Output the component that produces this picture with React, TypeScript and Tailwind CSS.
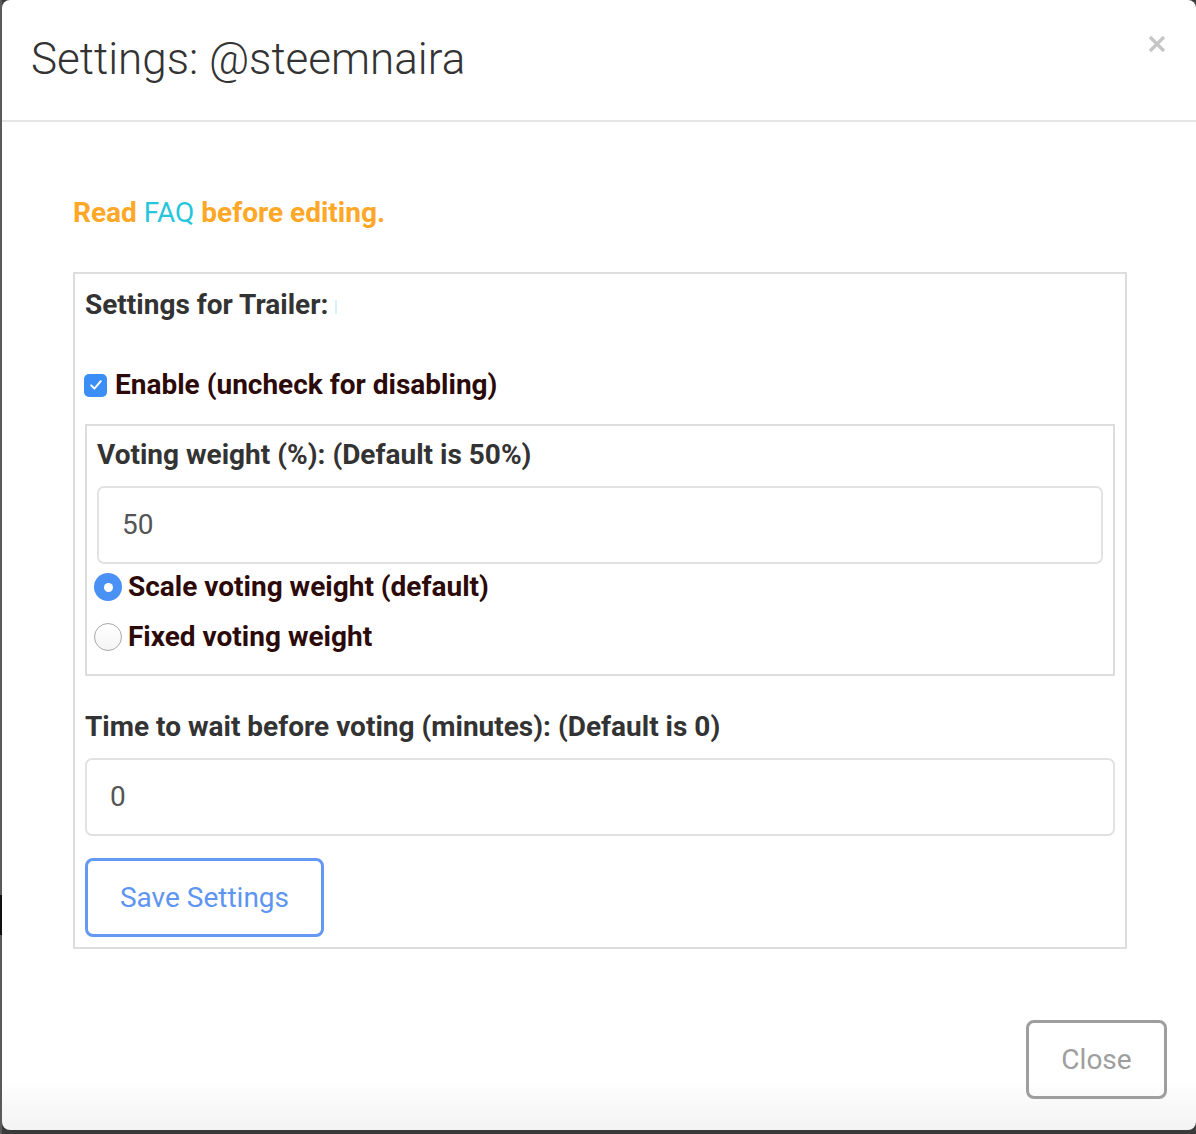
import React from 'react';

const font = "font-['Roboto','Liberation_Sans',sans-serif]";

function Radio({ checked, label }: { checked: boolean; label: string }) {
    return (
        <label className="flex items-center h-[36px] -ml-[3px]">
            {checked ? (
                <span className="w-[28px] h-[28px] rounded-full bg-[#4a91f6] flex items-center justify-center shrink-0">
                    <span className="w-[9px] h-[9px] rounded-full bg-white" />
                </span>
            ) : (
                <span className="w-[28px] h-[28px] rounded-full border-[1.5px] border-[#a8a8a8] bg-gradient-to-b from-white to-[#f4f4f4] shrink-0" />
            )}
            <span className="ml-[6px] text-[28px] font-bold text-[#2d0a0a] leading-[36px]">{label}</span>
        </label>
    );
}

export default function App() {
    return (
        <div className={`flex w-[1196px] h-[1134px] bg-[#3a3a3a] overflow-hidden ${font}`}>
            {/* page behind the modal */}
            <div className="w-[2px] flex flex-col shrink-0">
                <div className="h-[895px] bg-[#5a5a5a]" />
                <div className="h-[40px] bg-[#111]" />
                <div className="flex-1 bg-[#5a5a5a]" />
            </div>

            <div className="flex-1 h-[1130px] rounded-[8px] flex flex-col bg-[linear-gradient(to_bottom,#ffffff_1078px,#f3f3f3_1130px)]">
                {/* Header */}
                <div className="h-[122px] border-b-2 border-[#e5e5e5] flex justify-between shrink-0">
                    <h4 className="mt-[37px] pl-[29px] text-[44px] font-light text-[#333] leading-none">
                        Settings: @steemnaira
                    </h4>
                    <button className="mt-[35px] mr-[30px] w-[18px] h-[18px]">
                        <svg viewBox="0 0 18 18" width="18" height="18">
                            <path d="M2 2 L16 16 M16 2 L2 16" stroke="#c6c6c6" strokeWidth="3.2" strokeLinecap="butt" />
                        </svg>
                    </button>
                </div>

                {/* Body */}
                <div className="pl-[71px] pr-[69px] pt-[73px]">
                    <p className="text-[28px] font-bold text-[#ffa726] leading-[36px]">
                        Read <a className="font-normal text-[#26c6da]">FAQ</a> before editing.
                    </p>

                    <div className="mt-[41px] border-2 border-[#dddddd] px-[10px] pt-[13px] pb-[10px]">
                        <h5 className="text-[28px] font-bold text-[#333] leading-[36px]">
                            Settings for Trailer: <span className="inline-block w-[2px] h-[14px] rounded-full bg-[#d4f3f8] align-middle" />
                        </h5>

                        <label className="mt-[44px] flex items-center h-[36px] -ml-[1px]">
                            <span className="w-[23px] h-[23px] rounded-[5px] bg-[#3b8ef6] flex items-center justify-center shrink-0">
                                <svg viewBox="0 0 16 16" width="16" height="16">
                                    <path d="M3.2 8.4 L6.4 11.6 L12.8 4.2" fill="none" stroke="#fff" strokeWidth="2" strokeLinecap="round" strokeLinejoin="round" />
                                </svg>
                            </span>
                            <span className="ml-[8px] text-[28px] font-bold text-[#2d0a0a] leading-[36px]">
                                Enable (uncheck for disabling)
                            </span>
                        </label>

                        <div className="mt-[21px] border-2 border-[#dddddd] px-[10px] pt-[11px] pb-[19px]">
                            <label className="block text-[28px] font-bold text-[#333] leading-[36px]">
                                Voting weight (%): (Default is 50%)
                            </label>
                            <div className="mt-[13px] h-[78px] border-2 border-[#e2e2e2] rounded-[7px] pl-[23px] flex items-center text-[28px] text-[#555]">
                                50
                            </div>
                            <div className="mt-[5px] flex flex-col gap-[14px]">
                                <Radio checked label="Scale voting weight (default)" />
                                <Radio checked={false} label="Fixed voting weight" />
                            </div>
                        </div>

                        <label className="block mt-[33px] text-[28px] font-bold text-[#333] leading-[36px]">
                            Time to wait before voting (minutes): (Default is 0)
                        </label>
                        <div className="mt-[13px] h-[78px] border-2 border-[#e2e2e2] rounded-[7px] pl-[23px] flex items-center text-[28px] text-[#555]">
                            0
                        </div>

                        <button className="mt-[22px] w-[239px] h-[79px] border-[3px] border-[#6398f3] rounded-[8px] text-[28px] text-[#5e95f1] flex items-center justify-center">
                            Save Settings
                        </button>
                    </div>
                </div>

                {/* Footer */}
                <div className="mt-auto flex justify-end pr-[29px] pb-[31px]">
                    <button className="w-[141px] h-[79px] border-[3px] border-[#9e9e9e] rounded-[8px] text-[28px] text-[#9e9e9e] flex items-center justify-center">
                        Close
                    </button>
                </div>
            </div>
        </div>
    );
}
